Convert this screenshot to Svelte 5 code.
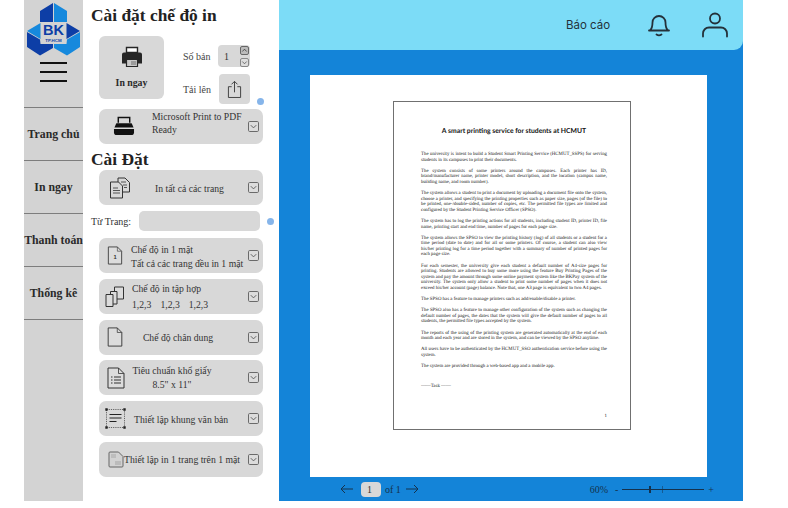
<script>
  const paragraphs = [
    "The university is intent to build a Student Smart Printing Service (HCMUT_SSPS) for serving students in its campuses to print their documents.",
    "The system consists of some printers around the campuses. Each printer has ID, brand/manufacturer name, printer model, short description, and the location (campus name, building name, and room number).",
    "The system allows a student to print a document by uploading a document file onto the system, choose a printer, and specifying the printing properties such as paper size, pages (of the file) to be printed, one-/double-sided, number of copies, etc. The permitted file types are limited and configured by the Student Printing Service Officer (SPSO).",
    "The system has to log the printing actions for all students, including student ID, printer ID, file name, printing start and end time, number of pages for each page size.",
    "The system allows the SPSO to view the printing history (log) of all students or a student for a time period (date to date) and for all or some printers. Of course, a student can also view his/her printing log for a time period together with a summary of number of printed pages for each page size.",
    "For each semester, the university give each student a default number of A4-size pages for printing. Students are allowed to buy some more using the feature Buy Printing Pages of the system and pay the amount through some online payment system like the BKPay system of the university. The system only allow a student to print some number of pages when it does not exceed his/her account (page) balance. Note that, one A3 page is equivalent to two A4 pages.",
    "The SPSO has a feature to manage printers such as add/enable/disable a printer.",
    "The SPSO also has a feature to manage other configuration of the system such as changing the default number of pages, the dates that the system will give the default number of pages to all students, the permitted file types accepted by the system.",
    "The reports of the using of the printing system are generated automatically at the end of each month and each year and are stored in the system, and can be viewed by the SPSO anytime.",
    "All users have to be authenticated by the HCMUT_SSO authentication service before using the system.",
    "The system are provided through a web-based app and a mobile app."
  ];
  const nav = ["Trang chủ", "In ngay", "Thanh toán", "Thống kê"];
</script>

{#snippet chevron()}
  <svg class="chev" viewBox="0 0 11 11" width="11" height="11"><rect x="0.5" y="0.5" width="10" height="10" rx="1.2" fill="#dcdcdc" stroke="#6a6a6a"/><path d="M2.800 4.200 5.500 6.900 8.200 4.200" fill="none" stroke="#555" stroke-width="0.9"/></svg>
{/snippet}

<div class="screen">
  <nav class="nav">
    <svg class="logo" viewBox="0 0 54 54" width="54" height="54">
      <path d="M13 8 26 0V19H13Z" fill="#0d3ea6"/>
      <path d="M27 0 40 8V19H27Z" fill="#1689dd"/>
      <path d="M0 28 13.500 20V36Z" fill="#1689dd"/>
      <path d="M0 29 13 36.500 13.500 41H26V45L13 52.500 0 44Z" fill="#0d3ea6"/>
      <path d="M53 28 39.500 20V36Z" fill="#0d3ea6"/>
      <path d="M53 29 40 36.500 39.500 41H27V45L40 52.500 53 44Z" fill="#1689dd"/>
      <text x="26.500" y="32" text-anchor="middle" class="bk">BK</text>
      <text x="26.500" y="38.500" text-anchor="middle" class="tp">TP.HCM</text>
    </svg>
    <div class="burger"><i></i><i></i><i></i></div>
    <ul>
      {#each nav as item}
        <li>{item}</li>
      {/each}
    </ul>
  </nav>

  <aside class="panel">
    <h2>Cài đặt chế độ in</h2>
    <div class="top">
      <div class="tile print-now">
        <svg viewBox="0 0 24 24" width="24" height="24"><path d="M6.500 2.500h11v5h-11z" fill="#fff" stroke="#262626" stroke-width="1.400"/><path d="M4 7.500h16a2 2 0 0 1 2 2v9h-4v-4H6v4H2v-9a2 2 0 0 1 2-2z" fill="#262626"/><path d="M6.500 14.500h11v7h-11z" fill="#c8c8c8" stroke="#262626" stroke-width="1.200"/><path d="M11 17h5M11 19h5" stroke="#555" stroke-width="0.800"/></svg>
        <strong>In ngay</strong>
      </div>
      <div class="side">
        <div class="side-row">
          <span class="side-label">Số bản</span>
          <div class="stepper">
            <span>1</span>
            <div class="steps">
              <svg viewBox="0 0 9 9" width="9" height="9"><rect x="0.500" y="0.500" width="8" height="8" rx="1.500" fill="#bbb" stroke="#666"/><path d="M2.300 5.500 4.500 3.200 6.700 5.500" fill="none" stroke="#333" stroke-width="0.800"/></svg>
              <svg viewBox="0 0 9 9" width="9" height="9"><rect x="0.500" y="0.500" width="8" height="8" rx="1.500" fill="#ddd" stroke="#888"/><path d="M2.300 3.500 4.500 5.800 6.700 3.500" fill="none" stroke="#555" stroke-width="0.800"/></svg>
            </div>
          </div>
        </div>
        <div class="side-row upload-row">
          <span class="side-label">Tải lên</span>
          <div class="upload">
            <svg viewBox="0 0 16 20" width="15" height="19"><path d="M5 7H1.500v11.500h13V7H11M8 13V1.500M4.800 4.500 8 1.300l3.200 3.200" fill="none" stroke="#3c3c3c" stroke-width="1"/></svg>
          </div>
        </div>
        <i class="dot dot-top"></i>
      </div>
    </div>

    <div class="card device">
      <svg class="icon" viewBox="0 0 24 22" width="24" height="21"><path d="M6 7V1.500h12V7" fill="none" stroke="#111" stroke-width="1.500"/><path d="M4 7.500h16l2 4.500H2z" fill="#111"/><path d="M1.500 13.500h21v3.500a3 3 0 0 1-3 3h-15a3 3 0 0 1-3-3z" fill="#111"/></svg>
      <div class="device-text"><span>Microsoft Print to PDF</span><span>Ready</span></div>
      {@render chevron()}
    </div>

    <h2 class="second">Cài Đặt</h2>

    <div class="card">
      <svg class="icon" viewBox="0 0 22 22" width="22" height="22"><g fill="#d8d8d8" stroke="#333" stroke-width="1"><path d="M9 1h7l4.500 4.500V15H9z"/><path d="M1.500 5h8l4 4v12h-12z"/></g><path d="M4 11h5M4 13.500h7M4 16h7M12 5h5M14 8h4M15 10.500h3" stroke="#333" stroke-width="0.800" fill="none"/></svg>
      <p class="center">In tất cả các trang</p>
      {@render chevron()}
    </div>

    <div class="range">
      <label for="from">Từ Trang:</label>
      <input id="from" type="text" />
      <i class="dot"></i>
    </div>

    <div class="card">
      <svg class="icon small" viewBox="0 0 16 20" width="16" height="19"><path d="M1 1h9.500L15 5.500V19H1z" fill="#dcdcdc" stroke="#444"/><path d="M10.500 1v4.500H15" fill="none" stroke="#444" stroke-width="0.700"/><text x="8" y="14" text-anchor="middle" class="one">1</text></svg>
      <div class="two-line one-side"><span>Chế độ in 1 mặt</span><span>Tất cả các trang đều in 1 mặt</span></div>
      {@render chevron()}
    </div>

    <div class="card">
      <svg class="icon stack" viewBox="0 0 20 21" width="20" height="21"><path d="M9.500 1h9v12h-9z" fill="#dcdcdc" stroke="#333"/><path d="M5.500 5.500h6.500V18H5.500z" fill="#dcdcdc" stroke="#333"/><path d="M1 8.500h7v12H1z" fill="#dcdcdc" stroke="#333"/></svg>
      <div class="two-line sets-block">
        <span>Chế độ in tập hợp</span>
        <span class="sets"><b>1,2,3</b><b>1,2,3</b><b>1,2,3</b></span>
      </div>
      {@render chevron()}
    </div>

    <div class="card">
      <svg class="icon small" viewBox="0 0 17 22" width="16" height="20"><path d="M1 1h10l5 5v15H1z" fill="#dcdcdc" stroke="#333" stroke-linejoin="round"/><path d="M11 1v5h5" fill="none" stroke="#333" stroke-width="0.800"/></svg>
      <p class="center portrait">Chế độ chân dung</p>
      {@render chevron()}
    </div>

    <div class="card">
      <svg class="icon small" viewBox="0 0 18 22" width="18" height="22"><path d="M1 1h10.500L17 6.500V21H1z" fill="#dcdcdc" stroke="#333" stroke-linejoin="round"/><path d="M11.500 1v5.500H17" fill="none" stroke="#333" stroke-width="0.800"/><path d="M4 10h1.500M7 10h7M4 13h1.500M7 13h7M4 16h1.500M7 16h7" stroke="#333" stroke-width="1"/></svg>
      <div class="two-line middle"><span>Tiêu chuẩn khổ giấy</span><span>8.5" x 11"</span></div>
      {@render chevron()}
    </div>

    <div class="card">
      <svg class="icon frame" viewBox="0 0 21 21" width="21" height="21"><rect x="1.500" y="1.500" width="18" height="18" fill="none" stroke="#333" stroke-width="0.700" stroke-dasharray="1.200 1"/><path d="M0.300 0.300h2.400v2.400H0.300zM18.300 0.300h2.400v2.400h-2.400zM0.300 18.300h2.400v2.400H0.300zM18.300 18.300h2.400v2.400h-2.400z" fill="#222"/><path d="M4.500 6.500h12M4.500 10h12M4.500 13.500h7" stroke="#222" stroke-width="1.100"/></svg>
      <p class="frame-label">Thiết lập khung văn bản</p>
      {@render chevron()}
    </div>

    <div class="card tight">
      <svg class="icon small" viewBox="0 0 16 17" width="16" height="17"><path d="M1 2a1 1 0 0 1 1-1h8.500L15 5.500V15a1 1 0 0 1-1 1H2a1 1 0 0 1-1-1z" fill="#d2d2d2" stroke="#666"/><path d="M3 4h5M3 6h5" stroke="#999" stroke-width="0.700"/><path d="M7 10h6v4H7z" fill="#bbb"/></svg>
      <p>Thiết lập in 1 trang trên 1 mặt</p>
      {@render chevron()}
    </div>
  </aside>

  <main class="main">
    <header class="head">
      <span class="report">Báo cáo</span>
      <svg class="bell" viewBox="0 0 22 24" width="22" height="24"><path d="M2 17.500c2-2 2.500-4 2.500-8a6.500 6.500 0 0 1 13 0c0 4 .5 6 2.500 8zM1 17.500h20M8.500 21.500c1.500 1 3.500 1 5 0" fill="none" stroke="#24313a" stroke-width="1.800" stroke-linecap="round" stroke-linejoin="round"/></svg>
      <svg class="user" viewBox="0 0 26 26" width="26" height="26"><circle cx="13" cy="6.500" r="5" fill="none" stroke="#24313a" stroke-width="1.800"/><path d="M1 24.500v-3a6 6 0 0 1 6-6h12a6 6 0 0 1 6 6v3" fill="none" stroke="#24313a" stroke-width="1.800" stroke-linecap="round"/></svg>
    </header>
    <section class="stage">
      <div class="sheet">
        <article class="doc">
          <h1>A smart printing service for students at HCMUT</h1>
          {#each paragraphs as para}
            <p>{para}</p>
          {/each}
          <p class="task">——Task ——</p>
          <span class="num">1</span>
        </article>
      </div>
      <footer class="bar">
        <div class="pager">
          <svg viewBox="0 0 14 10" width="14" height="10"><path d="M13 5H1M5 1 1 5l4 4" fill="none" stroke="#15324d" stroke-width="1"/></svg>
          <span class="pg">1</span>
          <span class="of">of 1</span>
          <svg viewBox="0 0 14 10" width="14" height="10"><path d="M1 5h12M9 1l4 4-4 4" fill="none" stroke="#15324d" stroke-width="1"/></svg>
        </div>
        <div class="zoom">
          <span class="pct">60%</span>
          <span class="pm">-</span>
          <div class="track"><i class="thumb"></i><i class="mark"></i></div>
          <span class="pm">+</span>
        </div>
      </footer>
    </section>
  </main>
</div>

<style>
  :global(body) { margin: 0; background: #fff; }
  .screen {
    width: 788px; height: 501px; display: flex; padding-left: 24px; box-sizing: border-box;
    font-family: "Liberation Serif", serif; color: #333; overflow: hidden;
  }
  .nav { width: 59px; flex: none; background: #d3d3d3; display: flex; flex-direction: column; }
  .logo { margin: 3px 0 0 3px; display: block; }
  .bk { font: 700 14.500px "Liberation Sans", sans-serif; fill: #0d3ea6; }
  .tp { font: 700 4.400px "Liberation Sans", sans-serif; fill: #0d3ea6; }
  .burger { margin: 5px 0 0 16px; display: flex; flex-direction: column; gap: 7px; }
  .burger i { display: block; width: 27px; height: 2px; background: #111; }
  ul { list-style: none; margin: 25px 0 0; padding: 0; border-top: 1px solid #7d7d7d; }
  li {
    height: 52px; border-bottom: 1px solid #7d7d7d; display: flex; align-items: center; justify-content: center;
    font-weight: 700; font-size: 11.800px; color: #2a2a2a; white-space: nowrap;
  }
  .panel { width: 196px; flex: none; padding: 5px 0 0 8px; box-sizing: border-box; background: #fff; }
  h2 { margin: 0; font-size: 17.400px; line-height: 21px; font-weight: 700; color: #222; }
  .second { margin-top: 5px; height: 21px; }
  .top { display: flex; margin: 10px 0 0 8px; height: 68px; }
  .tile { background: #d8d8d8; border-radius: 6px; }
  .print-now { width: 65px; height: 63px; display: flex; flex-direction: column; align-items: center; padding-top: 9px; box-sizing: border-box; }
  .print-now strong { margin-top: 8px; font-size: 9.800px; color: #2a2a2a; }
  .side { position: relative; margin-left: 19px; width: 90px; }
  .side-row { display: flex; align-items: center; justify-content: space-between; width: 67px; margin-top: 9px; }
  .upload-row { margin-top: 7px; }
  .side-label { font-size: 10px; color: #444; }
  .stepper { width: 32px; height: 22px; background: #d8d8d8; border-radius: 4px; display: flex; align-items: center; justify-content: space-between; padding: 0 1px 0 6px; box-sizing: border-box; font-size: 10px; }
  .steps { display: flex; flex-direction: column; gap: 3px; }
  .steps svg { display: block; }
  .upload { width: 31px; height: 30px; background: #d8d8d8; border-radius: 4px; display: flex; align-items: center; justify-content: center; }
  .dot { display: block; width: 7px; height: 7px; border-radius: 50%; background: #86b5ea; flex: none; }
  .dot-top { position: absolute; left: 74px; top: 62px; }
  .card {
    margin-left: 8px; width: 164px; height: 35px; box-sizing: border-box; background: #d8d8d8; border-radius: 7px;
    display: flex; align-items: center; padding: 0 4px 0 7px; margin-bottom: 5.750px; font-size: 9.700px; color: #333;
  }
  .device { margin-top: 5px; margin-bottom: 0; padding-left: 10px; }
  .device-text { flex: 1; display: flex; flex-direction: column; gap: 2px; margin-left: 16px; line-height: 11px; margin-top: -7px; }
  .chev { flex: none; display: block; margin-left: auto; }
  .icon { flex: none; display: block; margin-left: 3px; }
  .icon.small { margin-left: 1px; }
  .icon.stack { margin-left: -1px; }
  .icon.frame { margin-left: -1px; }
  .one { font: 700 6px "Liberation Sans", sans-serif; fill: #333; }
  .card p { margin: 0; padding-top: 1px; }
  .center { flex: 1; text-align: center; }
  .card .portrait { padding-right: 15px; }
  .card .frame-label { margin-left: 8px; }
  .two-line { flex: 1; display: flex; flex-direction: column; gap: 3px; line-height: 11px; margin-left: 8px; }
  .one-side { margin-top: 1px; }
  .sets-block { margin-left: 7px; }
  .two-line.middle { flex: none; width: 80px; margin-left: 7px; text-align: center; }
  .sets { display: flex; gap: 9px; margin-top: 2px; }
  .sets b { font-weight: 400; }
  .tight { padding-left: 8px; }
  .range { display: flex; align-items: center; height: 20px; margin: 6px 0 7px; font-size: 10px; color: #333; }
  .range label { width: 48px; flex: none; }
  .range input { width: 121px; height: 20px; box-sizing: border-box; border: 0; background: #d8d8d8; border-radius: 5px; padding: 0; }
  .range .dot { margin-left: 7px; }
  .main { width: 464px; flex: none; display: flex; flex-direction: column; }
  .head { height: 50px; flex: none; background: #7cdcf7; border-bottom-right-radius: 9px; display: flex; align-items: center; padding-left: 287px; box-sizing: border-box; position: relative; z-index: 1; }
  .report { font: 400 11.500px Inter, sans-serif; color: #24313a; width: 39px; white-space: nowrap; }
  .bell { margin-left: 43px; margin-top: -1px; }
  .user { margin-left: 32px; margin-top: -1px; }
  .stage { flex: 1; background: #1484d8; padding: 35px 0 0 31px; margin-top: -10px; display: flex; flex-direction: column; min-height: 0; }
  .sheet { width: 397px; height: 402px; background: #fff; flex: none; padding: 26px 0 0 83px; box-sizing: border-box; }
  .doc { width: 238px; height: 329px; box-sizing: border-box; border: 1px solid #707070; background: #fff; padding: 24px 23px 0 27px; position: relative; text-rendering: geometricPrecision; }
  h1 { margin: 0 0 16px; font: 700 6.800px/10px Lato, sans-serif; color: #111; text-align: center; white-space: nowrap; }
  .doc p { margin: 0 0 5.580px; font-size: 4.870px; line-height: 5.580px; text-align: justify; color: #222; }
  .doc .task { margin-top: 14px; }
  .num { position: absolute; right: 23px; top: 312px; font-size: 4.870px; color: #222; }
  .bar { flex: 1; display: flex; align-items: center; justify-content: space-between; color: #15324d; font-size: 10px; }
  .pager { display: flex; align-items: center; margin-left: 30px; }
  .pg { width: 20px; height: 15px; margin: 0 4px 0 7px; box-sizing: border-box; background: #d8d8d8; border-radius: 4px; padding: 1px 0 0 6px; color: #333; line-height: 14px; }
  .of { margin-right: 4px; }
  .zoom { display: flex; align-items: center; margin-right: 29px; }
  .pct { margin-right: 7px; }
  .track { width: 82px; height: 1px; background: #15324d; margin: 0 4px; position: relative; }
  .thumb, .mark { position: absolute; top: -3px; width: 1px; height: 7px; background: #15324d; }
  .thumb { left: 27px; width: 1.500px; }
  .mark { left: 40px; opacity: .5; }
</style>
